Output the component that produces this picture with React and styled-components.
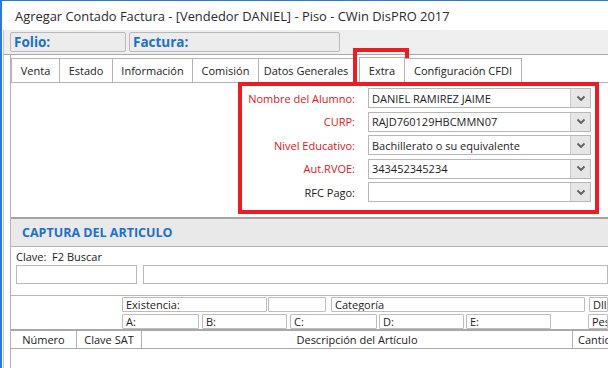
import React from 'react';
import styled, { createGlobalStyle } from 'styled-components';

const GlobalStyle = createGlobalStyle`
  html, body {
    margin: 0;
    padding: 0;
    background: #ffffff;
  }
  body {
    font-family: "Open Sans", "Noto Sans", sans-serif;
  }
`;

const RED = '#ec1c24';
const BLUE = '#1c6fca';

const Window = styled.div`
  width: 606px;
  height: 367px;
  border-left: 2px solid #2a7ad6;
  border-top: 1px solid #2a7ad6;
  background: #ffffff;
  overflow: hidden;
  display: flex;
  flex-direction: column;
`;

const TitleBar = styled.div`
  height: 29px;
  display: flex;
  align-items: center;
  padding-left: 13px;
  font-size: 12.9px;
  color: #2b2b2b;
  flex-shrink: 0;
`;

const Frame = styled.div`
  margin-left: 1px;
  border-left: 1px solid #c4c4c4;
  flex: 1;
  display: flex;
  flex-direction: column;
`;

const HeaderBar = styled.div`
  height: 25px;
  background: #efefef;
  border-bottom: 1px solid #a9a9a9;
  display: flex;
  align-items: flex-start;
  gap: 3px;
  padding: 2px 0 0 6px;
  box-sizing: border-box;
  position: relative;
  z-index: 0;
`;

const InfoBox = styled.div`
  width: ${(p) => p.w}px;
  height: 20px;
  box-sizing: border-box;
  border: 1px solid #b9b9b9;
  border-radius: 2px;
  background: #ececec;
  color: ${BLUE};
  font-weight: 700;
  font-size: 13.5px;
  display: flex;
  align-items: center;
  padding-left: 3px;
`;

const Content = styled.div`
  margin-left: 6px;
  border-left: 1px solid #b2b2b2;
  flex: 1;
  display: flex;
  flex-direction: column;
`;

const TabStrip = styled.div`
  height: 27px;
  display: flex;
  align-items: flex-end;
  position: relative;
  z-index: 2;
`;

const Tab = styled.div`
  position: relative;
  width: ${(p) => p.w}px;
  height: ${(p) => (p.active ? 26 : 24)}px;
  margin-left: ${(p) => p.ml || 0}px;
  margin-bottom: ${(p) => (p.active ? -1 : 0)}px;
  box-sizing: border-box;
  border: 1px solid #b5b5b5;
  border-bottom: none;
  margin-right: -1px;
  background: #ffffff;
  font-size: 11px;
  color: #222;
  display: flex;
  align-items: center;
  justify-content: center;
  white-space: nowrap;

  ${(p) =>
    p.highlight &&
    `
    &::after {
      content: '';
      position: absolute;
      top: -10px;
      left: -7px;
      right: -5px;
      bottom: -3px;
      border: 4px solid ${RED};
    }
  `}
`;

const TabPanel = styled.div`
  height: 135px;
  box-sizing: border-box;
  border-top: 1px solid #b5b5b5;
  display: flex;
  align-items: flex-start;
`;

const FormGroup = styled.div`
  margin-left: 227px;
  margin-top: -1px;
  width: 361px;
  height: 132px;
  box-sizing: border-box;
  border: 4px solid ${RED};
  padding: 2px 4px 0 0;
  display: flex;
  flex-direction: column;
  gap: 3.5px;
  position: relative;
  z-index: 3;
`;

const FormRow = styled.div`
  display: grid;
  grid-template-columns: 113px 223px;
  column-gap: 13px;
  height: 20px;
  align-items: center;
`;

const Label = styled.div`
  text-align: right;
  font-size: 11px;
  color: ${(p) => (p.required ? '#e3141c' : '#1a1a1a')};
  white-space: nowrap;
`;

const Combo = styled.div`
  height: 20px;
  box-sizing: border-box;
  border: 1px solid #b7b7b7;
  background: #ffffff;
  display: flex;
  align-items: stretch;
`;

const ComboText = styled.div`
  flex: 1;
  font-size: 11px;
  color: #1e1e1e;
  padding-left: 3px;
  display: flex;
  align-items: center;
  white-space: nowrap;
  overflow: hidden;
`;

const ComboButton = styled.div`
  width: 19px;
  background: #e6e6e6;
  border-left: 1px solid #cacaca;
  display: flex;
  align-items: center;
  justify-content: center;
`;

const SectionHeader = styled.div`
  height: 30px;
  box-sizing: border-box;
  border-top: 2px solid #a4a4a4;
  border-bottom: 1px solid #b2b2b2;
  background: #e9e9e9;
  color: ${BLUE};
  font-weight: 700;
  font-size: 12.5px;
  display: flex;
  align-items: center;
  padding-left: 11px;
`;

const ClaveArea = styled.div`
  height: 49px;
  box-sizing: border-box;
  border-bottom: 1px solid #b8b8b8;
  padding: 2px 0 0 5px;
`;

const SmallLabel = styled.div`
  font-size: 11px;
  color: #1a1a1a;
  height: 15px;
  line-height: 15px;
  white-space: pre;
`;

const InputRow = styled.div`
  display: flex;
  gap: 6px;
  margin-top: 1px;
`;

const TextInput = styled.div`
  width: ${(p) => (p.w ? `${p.w}px` : 'auto')};
  flex: ${(p) => (p.w ? '0 0 auto' : '1')};
  height: 19px;
  box-sizing: border-box;
  border: 1px solid #b9b9b9;
  background: #ffffff;
`;

const StockArea = styled.div`
  height: 35px;
  box-sizing: border-box;
  border-bottom: 2px solid #a8a8a8;
  padding: 1px 0 0 111px;
  display: flex;
  flex-direction: column;
  gap: 2px;
`;

const StockRow = styled.div`
  display: flex;
  height: 15px;
`;

const StockBox = styled.div`
  width: ${(p) => (p.w ? `${p.w}px` : 'auto')};
  flex: ${(p) => (p.w ? '0 0 auto' : '1')};
  margin-left: ${(p) => p.ml || 0}px;
  box-sizing: border-box;
  border: 1px solid #bdbdbd;
  border-radius: 1px;
  background: #ffffff;
  font-size: 11px;
  color: #222;
  padding-left: 3px;
  display: flex;
  align-items: center;
  white-space: nowrap;
  overflow: hidden;
`;

const GridHeader = styled.div`
  height: 18px;
  box-sizing: border-box;
  border-bottom: 1px solid #a8a8a8;
  display: flex;
`;

const HeaderCell = styled.div`
  width: ${(p) => (p.w ? `${p.w}px` : 'auto')};
  flex: ${(p) => (p.w ? '0 0 auto' : '1')};
  box-sizing: border-box;
  border-right: ${(p) => (p.last ? 'none' : '1px solid #b0b0b0')};
  font-size: 11px;
  color: #222;
  display: flex;
  align-items: center;
  justify-content: ${(p) => (p.left ? 'flex-start' : 'center')};
  padding-left: ${(p) => (p.left ? 5 : 0)}px;
  white-space: nowrap;
  overflow: hidden;
`;

const Chevron = () => (
  <svg width="10" height="7" viewBox="0 0 10 7">
    <path d="M1.5 1.5 L5 5 L8.5 1.5" fill="none" stroke="#5f5f5f" strokeWidth="1.8" />
  </svg>
);

const fields = [
  { label: 'Nombre del Alumno:', value: 'DANIEL RAMIREZ JAIME', required: true },
  { label: 'CURP:', value: 'RAJD760129HBCMMN07', required: true },
  { label: 'Nivel Educativo:', value: 'Bachillerato o su equivalente', required: true },
  { label: 'Aut.RVOE:', value: '343452345234', required: true },
  { label: 'RFC Pago:', value: '', required: false },
];

const tabs = [
  { name: 'Venta', w: 49 },
  { name: 'Estado', w: 54 },
  { name: 'Información', w: 81 },
  { name: 'Comisión', w: 67 },
  { name: 'Datos Generales', w: 96 },
  { name: 'Extra', w: 46, active: true, ml: 6 },
  { name: 'Configuración CFDI', w: 118 },
];

export default function App() {
  return (
    <>
      <GlobalStyle />
      <Window>
        <TitleBar>Agregar Contado Factura - [Vendedor DANIEL] - Piso - CWin DisPRO 2017</TitleBar>
        <Frame>
          <HeaderBar>
            <InfoBox w={116}>Folio:</InfoBox>
            <InfoBox w={211}>Factura:</InfoBox>
          </HeaderBar>
          <Content>
            <TabStrip>
              {tabs.map((t) => (
                <Tab key={t.name} w={t.w} ml={t.ml} active={t.active} highlight={t.active}>
                  {t.name}
                </Tab>
              ))}
            </TabStrip>
            <TabPanel>
              <FormGroup>
                {fields.map((f) => (
                  <FormRow key={f.label}>
                    <Label required={f.required}>{f.label}</Label>
                    <Combo>
                      <ComboText>{f.value}</ComboText>
                      <ComboButton>
                        <Chevron />
                      </ComboButton>
                    </Combo>
                  </FormRow>
                ))}
              </FormGroup>
            </TabPanel>
            <SectionHeader>CAPTURA DEL ARTICULO</SectionHeader>
            <ClaveArea>
              <SmallLabel>Clave:  F2 Buscar</SmallLabel>
              <InputRow>
                <TextInput w={121} />
                <TextInput />
              </InputRow>
            </ClaveArea>
            <StockArea>
              <StockRow>
                <StockBox w={145}>Existencia:</StockBox>
                <StockBox w={58} ml={1} />
                <StockBox w={254} ml={5}>Categoría</StockBox>
                <StockBox ml={4}>Dlls</StockBox>
              </StockRow>
              <StockRow>
                <StockBox w={77}>A:</StockBox>
                <StockBox w={85} ml={3}>B:</StockBox>
                <StockBox w={87} ml={3}>C:</StockBox>
                <StockBox w={85} ml={2}>D:</StockBox>
                <StockBox w={85} ml={2}>E:</StockBox>
                <StockBox ml={37}>Pes</StockBox>
              </StockRow>
            </StockArea>
            <GridHeader>
              <HeaderCell w={66}>Número</HeaderCell>
              <HeaderCell w={65}>Clave SAT</HeaderCell>
              <HeaderCell w={431}>Descripción del Artículo</HeaderCell>
              <HeaderCell left last>Cantidad</HeaderCell>
            </GridHeader>
          </Content>
        </Frame>
      </Window>
    </>
  );
}
